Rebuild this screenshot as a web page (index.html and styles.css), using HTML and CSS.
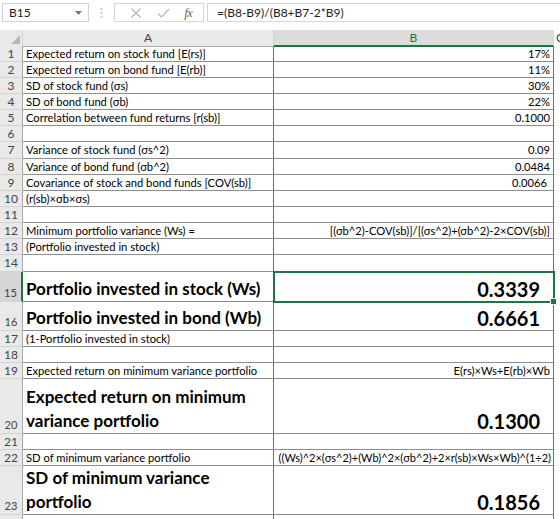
FILE: index.html
```html
<!DOCTYPE html>
<html>
<head>
<meta charset="utf-8">
<link rel="stylesheet" href="styles.css">
</head>
<body>
<div class="fbar">
  <div class="namebox"><span class="nb-text">B15</span><svg class="caret" width="7" height="4" viewBox="0 0 7 4"><path d="M0 0H7L3.5 4Z" fill="#777"/></svg></div>
  <div class="dots"><svg width="3" height="12" viewBox="0 0 3 12"><circle cx="1.5" cy="2" r="1" fill="#c4c4c4"/><circle cx="1.5" cy="6" r="1" fill="#c4c4c4"/><circle cx="1.5" cy="10" r="1" fill="#c4c4c4"/></svg></div>
  <div class="btns">
    <svg class="ico" width="12" height="12" viewBox="0 0 12 12"><path d="M1.5 1.5L10.5 10.5M10.5 1.5L1.5 10.5" stroke="#b4b4b4" stroke-width="1.2" fill="none"/></svg>
    <svg class="ico" width="13" height="12" viewBox="0 0 13 12"><path d="M1 6.5L4.5 10L12 2" stroke="#b4b4b4" stroke-width="1.2" fill="none"/></svg>
    <span class="fx">fx</span>
  </div>
  <div class="formula">=(B8-B9)/(B8+B7-2*B9)</div>
</div>
<div class="sheet">
  <div class="row hdr">
    <div class="corner"><svg width="9" height="9" viewBox="0 0 9 9"><path d="M9 0V9H0Z" fill="#b7b7b7"/></svg></div>
    <div class="ch">A</div>
    <div class="ch sel">B</div>
    <div class="ch cc">C</div>
  </div>
  <div class="row"><div class="rh">1</div><div class="ca">Expected return on stock fund [E(rs)]</div><div class="cb">17%</div><div class="cc"></div></div>
  <div class="row"><div class="rh">2</div><div class="ca">Expected return on bond fund [E(rb)]</div><div class="cb">11%</div><div class="cc"></div></div>
  <div class="row"><div class="rh">3</div><div class="ca">SD of stock fund (σs)</div><div class="cb">30%</div><div class="cc"></div></div>
  <div class="row"><div class="rh">4</div><div class="ca">SD of bond fund (σb)</div><div class="cb">22%</div><div class="cc"></div></div>
  <div class="row"><div class="rh">5</div><div class="ca">Correlation between fund returns [r(sb)]</div><div class="cb">0.1000</div><div class="cc"></div></div>
  <div class="row"><div class="rh">6</div><div class="ca"></div><div class="cb"></div><div class="cc"></div></div>
  <div class="row h17"><div class="rh">7</div><div class="ca">Variance of stock fund (σs^2)</div><div class="cb">0.09</div><div class="cc"></div></div>
  <div class="row"><div class="rh">8</div><div class="ca">Variance of bond fund (σb^2)</div><div class="cb">0.0484</div><div class="cc"></div></div>
  <div class="row"><div class="rh">9</div><div class="ca">Covariance of stock and bond funds [COV(sb)]</div><div class="cb pr6">0.0066</div><div class="cc"></div></div>
  <div class="row"><div class="rh">10</div><div class="ca">(r(sb)×σb×σs)</div><div class="cb"></div><div class="cc"></div></div>
  <div class="row"><div class="rh">11</div><div class="ca"></div><div class="cb"></div><div class="cc"></div></div>
  <div class="row"><div class="rh">12</div><div class="ca">Minimum portfolio variance (Ws) =</div><div class="cb">[(σb^2)-COV(sb)]/[(σs^2)+(σb^2)-2×COV(sb)]</div><div class="cc"></div></div>
  <div class="row"><div class="rh">13</div><div class="ca">(Portfolio invested in stock)</div><div class="cb"></div><div class="cc"></div></div>
  <div class="row h17"><div class="rh">14</div><div class="ca"></div><div class="cb"></div><div class="cc"></div></div>
  <div class="row h30"><div class="rh bot selrow">15</div><div class="ca big">Portfolio invested in stock (Ws)</div><div class="cb big num active">0.3339<span class="handle"></span></div><div class="cc"></div></div>
  <div class="row h29"><div class="rh bot">16</div><div class="ca big">Portfolio invested in bond (Wb)</div><div class="cb big num">0.6661</div><div class="cc"></div></div>
  <div class="row"><div class="rh">17</div><div class="ca">(1-Portfolio invested in stock)</div><div class="cb"></div><div class="cc"></div></div>
  <div class="row"><div class="rh">18</div><div class="ca"></div><div class="cb"></div><div class="cc"></div></div>
  <div class="row"><div class="rh">19</div><div class="ca">Expected return on minimum variance portfolio</div><div class="cb">E(rs)×Ws+E(rb)×Wb</div><div class="cc"></div></div>
  <div class="row h55"><div class="rh bot">20</div><div class="ca big wrap">Expected return on minimum variance portfolio</div><div class="cb big num">0.1300</div><div class="cc"></div></div>
  <div class="row"><div class="rh">21</div><div class="ca"></div><div class="cb"></div><div class="cc"></div></div>
  <div class="row"><div class="rh">22</div><div class="ca">SD of minimum variance portfolio</div><div class="cb s11">((Ws)^2×(σs^2)+(Wb)^2×(σb^2)+2×r(sb)×Ws×Wb)^(1÷2)</div><div class="cc"></div></div>
  <div class="row h49"><div class="rh bot">23</div><div class="ca big wrap">SD of minimum variance portfolio</div><div class="cb big num">0.1856</div><div class="cc"></div></div>
  <div class="row"><div class="rh">24</div><div class="ca"></div><div class="cb"></div><div class="cc"></div></div>
</div>
</body>
</html>
```

FILE: styles.css
```css
html, body {
  margin: 0;
  padding: 0;
  background: #fff;
  overflow: hidden;
}
body {
  width: 560px;
  height: 519px;
  font-family: Lato, "Open Sans", sans-serif;
  color: #000;
}
.fbar {
  height: 30px;
  box-sizing: border-box;
  display: flex;
  align-items: flex-start;
  padding-top: 3px;
  padding-left: 2px;
  background: #fff;
}
.namebox {
  width: 87px;
  height: 19px;
  box-sizing: border-box;
  border: 1px solid #d0d0d0;
  display: flex;
  align-items: center;
  justify-content: space-between;
  padding: 0 6px 0 6px;
  font-size: 12px;
  color: #222;
}
.dots {
  width: 25px;
  height: 19px;
  display: flex;
  align-items: center;
  justify-content: center;
}
.btns {
  width: 90px;
  height: 19px;
  box-sizing: border-box;
  border: 1px solid #d6d6d6;
  display: flex;
  align-items: center;
  justify-content: space-around;
  padding: 0 4px 0 8px;
}
.fx {
  font-family: "Liberation Serif", serif;
  font-style: italic;
  font-size: 13px;
  color: #666;
  letter-spacing: -1px;
}
.formula {
  flex: 1;
  margin-left: 3px;
  height: 19px;
  box-sizing: border-box;
  border: 1px solid #d6d6d6;
  border-right: none;
  font-size: 12px;
  line-height: 17px;
  padding-left: 9px;
  color: #222;
}
.sheet {
  display: flex;
  flex-direction: column;
}
.row {
  display: grid;
  grid-template-columns: 23px 251px 280px 1fr;
  height: 16px;
  flex: none;
}
.h17 { height: 17px; }
.h29 { height: 29px; }
.h30 { height: 30px; }
.h49 { height: 49px; }
.h55 { height: 55px; }
.hdr {
  height: 16px;
  background: #e9e9e9;
}
.corner {
  box-sizing: border-box;
  border-right: 1px solid #d4d4d4;
  border-bottom: 1px solid #ababab;
  display: flex;
  align-items: flex-end;
  justify-content: flex-end;
  padding: 0 2px 2px 0;
}
.ch {
  box-sizing: border-box;
  border-right: 1px solid #d4d4d4;
  border-bottom: 1px solid #ababab;
  text-align: center;
  font-size: 12px;
  line-height: 15px;
  color: #444;
}
.ch.sel {
  background: #dcdcdc;
  color: #217346;
  border-bottom: 2px solid #217346;
}
.ch.cc {
  text-align: left;
  padding-left: 2px;
  border-right: none;
}
.rh {
  box-sizing: border-box;
  background: #e9e9e9;
  border-right: 1px solid #a8a8a8;
  border-bottom: 1px solid #d4d4d4;
  text-align: center;
  font-size: 12px;
  line-height: 15px;
  color: #444;
}
.rh.bot {
  display: flex;
  align-items: flex-end;
  justify-content: center;
  padding-bottom: 1px;
  font-size: 11px;
}
.rh.selrow {
  background: #d6d6d6;
  border-right: 2px solid #217346;
}
.ca, .cb {
  box-sizing: border-box;
  border-right: 1px solid #6f6f6f;
  border-bottom: 1px solid #8e8e8e;
  font-size: 11.2px;
  line-height: 15px;
  white-space: nowrap;
  overflow: hidden;
}
.ca { padding-left: 3px; }
.cb {
  text-align: right;
  padding-right: 3px;
  position: relative;
  overflow: visible;
}
.cb.pr6 { padding-right: 6px; }
.cc { background: #fff; }
.s11 { font-size: 11px; padding-right: 2px; }
.big {
  font-weight: bold;
  font-size: 17px;
  display: flex;
  align-items: flex-end;
  padding-bottom: 0;
  line-height: 24px;
}
.cb.big {
  justify-content: flex-end;
  padding-right: 13px;
}
.cb.num { font-size: 20px; }
.ca.wrap {
  white-space: normal;
  padding-right: 4px;
}
.active {
  outline: 2px solid #217346;
  outline-offset: -1px;
  z-index: 1;
}
.handle {
  position: absolute;
  right: -4px;
  bottom: -4px;
  width: 5px;
  height: 5px;
  background: #217346;
  border: 1px solid #fff;
}
```
